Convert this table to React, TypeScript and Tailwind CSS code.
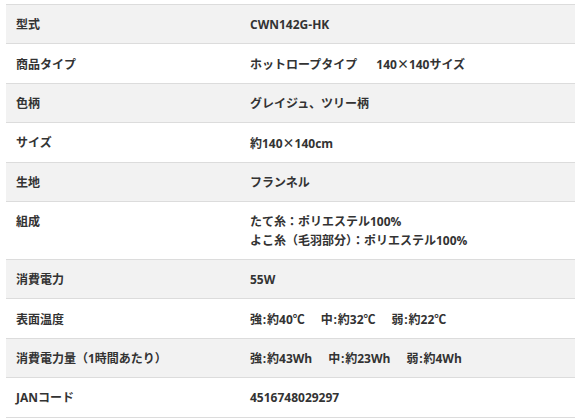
import React from "react";

const X = () => <span style={{ fontFamily: '"Noto Sans CJK JP", sans-serif' }}>×</span>;
const C = () => <span className="inline-block w-[5px] text-center">:</span>;
const G = () => <span className="inline-block w-[16px]" />;

const rows: { label: string; value: React.ReactNode; tall?: boolean }[] = [
  { label: "型式", value: "CWN142G-HK" },
  {
    label: "商品タイプ",
    value: (
      <>
        ホットロープタイプ<span className="inline-block w-[19px]" />140<X />140サイズ
      </>
    ),
  },
  { label: "色柄", value: "グレイジュ、ツリー柄" },
  {
    label: "サイズ",
    value: (
      <>
        約140<X />140cm
      </>
    ),
  },
  { label: "生地", value: "フランネル" },
  {
    label: "組成",
    value: (
      <>
        <div>たて糸：ポリエステル100%</div>
        <div>よこ糸（毛羽部分）：ポリエステル100%</div>
      </>
    ),
    tall: true,
  },
  { label: "消費電力", value: "55W" },
  {
    label: "表面温度",
    value: (
      <>
        強<C />約40℃<G />中<C />約32℃<G />弱<C />約22℃
      </>
    ),
  },
  {
    label: "消費電力量（1時間あたり）",
    value: (
      <>
        強<C />約43Wh<G />中<C />約23Wh<G />弱<C />約4Wh
      </>
    ),
  },
  { label: "JANコード", value: "4516748029297" },
];

export default function App() {
  return (
    <div
      className="w-[580px] h-[419px] bg-white pt-[4px] pl-[6px] text-[12px] font-bold text-[#333]"
      style={{ fontFamily: '"Open Sans", "Noto Sans CJK JP", sans-serif' }}
    >
      <div className="w-[569px] border-t border-[#dcdcdc]">
        {rows.map((r, i) => (
          <div
            key={i}
            className={`flex border-b border-[#dcdcdc] ${i % 2 === 0 ? "bg-[#f2f2f2]" : "bg-white"} ${r.tall ? "h-[58px] items-start pt-[10px]" : "h-[39.4px] items-center pt-[1px]"}`}
          >
            <div className="w-[244px] pl-[10px] leading-[19px]">{r.label}</div>
            <div className="flex-1 leading-[19px]">{r.value}</div>
          </div>
        ))}
      </div>
    </div>
  );
}
